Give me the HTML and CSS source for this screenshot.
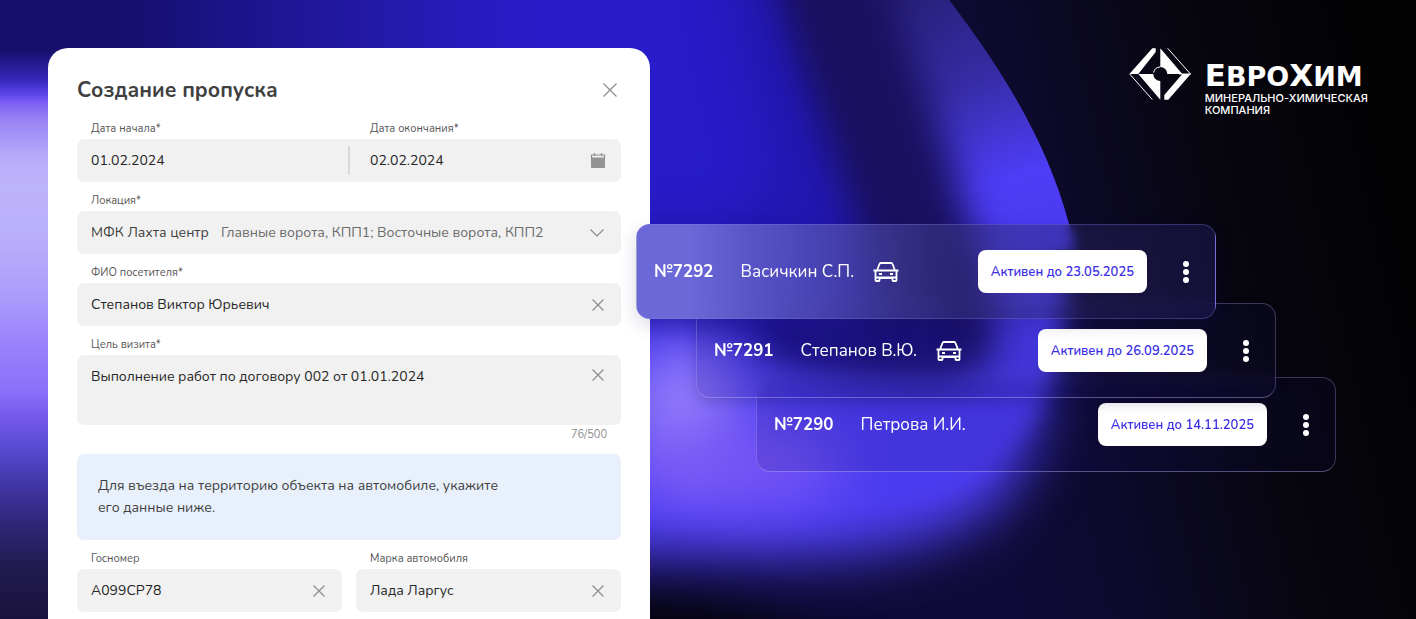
FILE: index.html
```html
<!DOCTYPE html>
<html lang="ru">
<head>
<meta charset="utf-8">
<title>Создание пропуска</title>
<meta name="viewport" content="width=device-width, initial-scale=1">
<link rel="stylesheet" href="styles.css">
</head>
<body>
<div class="page">
  <svg class="backdrop" viewBox="0 0 1416 619" preserveAspectRatio="none" aria-hidden="true">
    <defs>
      <linearGradient id="base" gradientUnits="userSpaceOnUse" x1="0" y1="0" x2="1416" y2="0">
        <stop offset="0" stop-color="#170f6b"/>
        <stop offset=".09" stop-color="#170f6e"/>
        <stop offset=".16" stop-color="#1b1388"/>
        <stop offset=".28" stop-color="#241aac"/>
        <stop offset=".4" stop-color="#2a1ecb"/>
        <stop offset=".46" stop-color="#271cc2"/>
      </linearGradient>
      <linearGradient id="fade" gradientUnits="userSpaceOnUse" x1="420" y1="0" x2="640" y2="0">
        <stop offset="0" stop-color="#fff"/>
        <stop offset="1" stop-color="#000"/>
      </linearGradient>
      <mask id="topleft"><rect width="640" height="130" fill="url(#fade)"/></mask>
      <linearGradient id="left" gradientUnits="userSpaceOnUse" x1="0" y1="0" x2="0" y2="619">
        <stop offset="0" stop-color="#170f6b" stop-opacity="0"/>
        <stop offset=".08" stop-color="#170f6b"/>
        <stop offset=".128" stop-color="#3527b8"/>
        <stop offset=".152" stop-color="#5a44ea"/>
        <stop offset=".165" stop-color="#7a5cf4"/>
        <stop offset=".19" stop-color="#9580f4"/>
        <stop offset=".255" stop-color="#b8acf8"/>
        <stop offset=".3" stop-color="#beb4fa"/>
        <stop offset=".38" stop-color="#b9aefa"/>
        <stop offset=".48" stop-color="#ab9cfb"/>
        <stop offset=".55" stop-color="#9a84fb"/>
        <stop offset=".63" stop-color="#8a70fa"/>
        <stop offset=".675" stop-color="#7558e8"/>
        <stop offset=".72" stop-color="#5a4bd4"/>
        <stop offset=".78" stop-color="#4336a8"/>
        <stop offset=".84" stop-color="#31277c"/>
        <stop offset=".91" stop-color="#231c52"/>
        <stop offset="1" stop-color="#18123c"/>
      </linearGradient>
      <linearGradient id="dark" gradientUnits="userSpaceOnUse" x1="960" y1="340" x2="1416" y2="240">
        <stop offset="0" stop-color="#0f0b38"/>
        <stop offset=".25" stop-color="#0d0a2c"/>
        <stop offset=".6" stop-color="#07060f"/>
        <stop offset="1" stop-color="#020203"/>
      </linearGradient>
      <linearGradient id="blade" gradientUnits="userSpaceOnUse" x1="900" y1="0" x2="980" y2="240">
        <stop offset="0" stop-color="#2a217c"/>
        <stop offset=".4" stop-color="#372ca6"/>
        <stop offset=".8" stop-color="#4d3df6"/>
        <stop offset="1" stop-color="#4b3cf2"/>
      </linearGradient>
      <filter id="b2" color-interpolation-filters="sRGB" filterUnits="userSpaceOnUse" x="0" y="-200" width="1600" height="1000"><feGaussianBlur stdDeviation="2"/></filter>
      <filter id="b10" color-interpolation-filters="sRGB" filterUnits="userSpaceOnUse" x="0" y="-200" width="1600" height="1100"><feGaussianBlur stdDeviation="10"/></filter>
      <filter id="b18" color-interpolation-filters="sRGB" filterUnits="userSpaceOnUse" x="0" y="-200" width="1600" height="1100"><feGaussianBlur stdDeviation="18"/></filter>
      <filter id="b28" color-interpolation-filters="sRGB" filterUnits="userSpaceOnUse" x="0" y="-200" width="1600" height="1100"><feGaussianBlur stdDeviation="28"/></filter>
      <clipPath id="edge"><path d="M0-40H918C990 50 1044 130 1069 224C1080 270 1120 330 1140 640H0Z"/></clipPath>
    </defs>

    <rect width="1416" height="619" fill="url(#dark)"/>
    <path fill="#4e3ef4" filter="url(#b28)" d="M200 300H1040C1050 380 1044 440 1012 490C966 546 860 562 760 558C700 556 680 556 200 556Z"/>
    <path fill="#4b3cf0" filter="url(#b10)" d="M600 250H1064C1070 280 1062 340 1046 390C1030 440 980 490 900 500H600Z"/>

    <g clip-path="url(#edge)" filter="url(#b2)">
      <path fill="url(#blade)" d="M400-100H1100V200C1100 260 1060 250 1000 260H400Z"/>
      <path fill="#1a1160" filter="url(#b18)" d="M740-100H862C896 30 946 130 972 230C1000 310 1008 368 966 374C910 380 840 376 760 348Z"/>
      <path fill="#2217b0" filter="url(#b18)" d="M400-120H748C780 40 836 140 862 250C874 310 866 352 840 354C780 350 700 320 400 308Z"/>
      <path fill="#281cca" filter="url(#b28)" d="M400-120H710C720 40 756 120 766 180C730 230 700 230 400 220Z"/>
      <path fill="#1b1180" filter="url(#b18)" d="M760 320C820 320 900 310 960 320V362C900 372 820 356 760 336Z"/>
    </g>

    <rect width="640" height="130" fill="url(#base)" mask="url(#topleft)"/>
    <rect width="120" height="619" fill="url(#left)"/>

    <ellipse cx="684" cy="410" rx="54" ry="66" fill="#937cfa" filter="url(#b28)"/>
    <ellipse cx="735" cy="468" rx="110" ry="44" fill="#7c59f6" opacity=".85" filter="url(#b28)"/>
    <path fill="#05040d" filter="url(#b18)" d="M400 596C720 592 800 610 940 700H400Z"/>
  </svg>

  <main class="layout">
    <form class="panel">
      <header class="panel-head">
        <h1 class="panel-title">Создание пропуска</h1>
        <button class="icon-btn" type="button" aria-label="Закрыть">
          <svg class="cross-lg" viewBox="0 0 14 14"><path d="M.5.5l13 13M13.5.5l-13 13"/></svg>
        </button>
      </header>

      <div class="field">
        <div class="pair">
          <label class="label" for="from">Дата начала*</label>
          <label class="label" for="to">Дата окончания*</label>
        </div>
        <div class="dates">
          <input class="input" id="from" type="text" value="01.02.2024">
          <div class="date-end">
            <input class="input" id="to" type="text" value="02.02.2024">
            <button class="icon-btn" type="button" aria-label="Календарь">
              <svg class="calendar" viewBox="0 0 14 15"><path class="fill" d="M0 4.500h14V14a1 1 0 0 1-1 1H1a1 1 0 0 1-1-1z"/><path d="M.5 5V2h13v3M3.500 0v3M10.500 0v3"/></svg>
            </button>
          </div>
        </div>
      </div>

      <div class="field">
        <label class="label" for="place">Локация*</label>
        <div class="box">
          <select class="select" id="place"><option>МФК Лахта центр</option></select>
          <span class="gates">Главные ворота, КПП1; Восточные ворота, КПП2</span>
          <svg class="chevron" viewBox="0 0 14 8"><path d="M.5.5L7 7l6.500-6.500"/></svg>
        </div>
      </div>

      <div class="field">
        <label class="label" for="visitor">ФИО посетителя*</label>
        <div class="box">
          <input class="input" id="visitor" type="text" value="Степанов Виктор Юрьевич">
          <button class="icon-btn" type="button" aria-label="Очистить"><svg class="cross" viewBox="0 0 12 12"><path d="M.5.5l11 11M11.500.5l-11 11"/></svg></button>
        </div>
      </div>

      <div class="field">
        <label class="label" for="purpose">Цель визита*</label>
        <div class="box box-tall">
          <textarea class="input textarea" id="purpose" rows="2">Выполнение работ по договору 002 от 01.01.2024</textarea>
          <button class="icon-btn" type="button" aria-label="Очистить"><svg class="cross" viewBox="0 0 12 12"><path d="M.5.5l11 11M11.500.5l-11 11"/></svg></button>
        </div>
        <p class="counter">76/500</p>
      </div>

      <p class="notice">Для въезда на территорию объекта на автомобиле, укажите<br>его данные ниже.</p>

      <div class="pair">
        <div class="field">
          <label class="label" for="plate">Госномер</label>
          <div class="box">
            <input class="input" id="plate" type="text" value="А099СР78">
            <button class="icon-btn" type="button" aria-label="Очистить"><svg class="cross" viewBox="0 0 12 12"><path d="M.5.5l11 11M11.500.5l-11 11"/></svg></button>
          </div>
        </div>
        <div class="field">
          <label class="label" for="model">Марка автомобиля</label>
          <div class="box">
            <input class="input" id="model" type="text" value="Лада Ларгус">
            <button class="icon-btn" type="button" aria-label="Очистить"><svg class="cross" viewBox="0 0 12 12"><path d="M.5.5l11 11M11.500.5l-11 11"/></svg></button>
          </div>
        </div>
      </div>
    </form>

    <section class="side">
      <div class="brand">
        <svg class="brand-mark" viewBox="0 0 62 52" aria-hidden="true">
          <path d="M.4 26L23.300.3h3.400V4L9.300 26zM31.300.3L53.300 26H38.300a7 7 0 0 0-7-7zM9.300 26h15a7 7 0 0 0 7 7v18.700zM61.700 26L39.300 51.700h-4V47L53.300 26z"/>
          <path class="thin" d="M38.700.3L61.500 26H50M.7 26l22.600 25.500M24.600 24.500a7 7 0 0 1 6.700-5.500"/>
        </svg>
        <div class="brand-text">
          <div class="brand-name">Е<span class="brand-small">вро</span>Х<span class="brand-small">им</span></div>
          <div class="brand-sub">МИНЕРАЛЬНО-ХИМИЧЕСКАЯ<br>КОМПАНИЯ</div>
        </div>
      </div>

      <ul class="passes">
        <li class="pass pass-front">
          <span class="pass-no">№7292</span>
          <span class="pass-name">Васичкин С.П.</span>
          <svg class="car" viewBox="0 0 26 20"><path d="M4 8.500L6.500 2Q6.800 1 7.800 1h10.400q1 0 1.300 1L22 8.500M.5 8.500h25M2.500 9v9.300q0 .7.7.7h2.600q.7 0 .7-.7V16h13v2.300q0 .7.7.7h2.600q.7 0 .7-.7V9M2.500 15.500h21M6 12h3M17 12h3"/></svg>
          <button class="status" type="button">Активен до 23.05.2025</button>
          <button class="more" type="button" aria-label="Меню"><svg class="dots" viewBox="0 0 6 22"><circle cx="3" cy="3" r="3"/><circle cx="3" cy="11" r="3"/><circle cx="3" cy="19" r="3"/></svg></button>
        </li>
        <li class="pass pass-middle">
          <span class="pass-no">№7291</span>
          <span class="pass-name">Степанов В.Ю.</span>
          <svg class="car" viewBox="0 0 26 20"><path d="M4 8.500L6.500 2Q6.800 1 7.800 1h10.400q1 0 1.300 1L22 8.500M.5 8.500h25M2.500 9v9.300q0 .7.7.7h2.600q.7 0 .7-.7V16h13v2.300q0 .7.7.7h2.600q.7 0 .7-.7V9M2.500 15.500h21M6 12h3M17 12h3"/></svg>
          <button class="status" type="button">Активен до 26.09.2025</button>
          <button class="more" type="button" aria-label="Меню"><svg class="dots" viewBox="0 0 6 22"><circle cx="3" cy="3" r="3"/><circle cx="3" cy="11" r="3"/><circle cx="3" cy="19" r="3"/></svg></button>
        </li>
        <li class="pass pass-back">
          <span class="pass-no">№7290</span>
          <span class="pass-name">Петрова И.И.</span>
          <button class="status" type="button">Активен до 14.11.2025</button>
          <button class="more" type="button" aria-label="Меню"><svg class="dots" viewBox="0 0 6 22"><circle cx="3" cy="3" r="3"/><circle cx="3" cy="11" r="3"/><circle cx="3" cy="19" r="3"/></svg></button>
        </li>
      </ul>
    </section>
  </main>
</div>
</body>
</html>
```

FILE: styles.css
```css
* { box-sizing: border-box; }

body {
  margin: 0;
  background: #08061a;
  color: #333;
  font-family: "Nunito", "Noto Sans", sans-serif;
  font-size: 14px;
}

h1, p, ul { margin: 0; padding: 0; font-weight: inherit; }

button, input, select, textarea { font: inherit; color: inherit; }

svg { display: block; }

.page {
  position: relative;
  min-height: 100vh;
  display: flex;
  overflow: hidden;
}

.backdrop {
  position: absolute;
  inset: 0;
  width: 100%;
  height: 100%;
}

.layout {
  position: relative;
  flex: 1;
  display: grid;
  grid-template-columns: minmax(0, 602fr) minmax(0, 718fr);
  padding: 48px 48px 0;
}

/* Form */

.panel {
  display: flex;
  flex-direction: column;
  gap: 11px;
  padding: 28px 29px 7px;
  background: #fff;
  border-radius: 20px 20px 0 0;
}

.panel-head {
  display: flex;
  align-items: center;
  justify-content: space-between;
  height: 28px;
  padding-right: 4px;
  margin-bottom: 6px;
}

.panel-title {
  color: #404040;
  font-size: 21px;
  line-height: 28px;
  font-weight: 700;
}

.field {
  display: flex;
  flex-direction: column;
  gap: 3px;
}

.pair {
  display: grid;
  grid-template-columns: 1fr 1fr;
  gap: 14px;
}

.label {
  padding-left: 14px;
  color: #555;
  font-size: 11px;
  line-height: 15px;
}

.box, .dates {
  height: 43px;
  border-radius: 7px;
  background: #f1f1f1;
}

.box {
  display: flex;
  align-items: center;
  padding: 0 17px 0 14px;
}

.box-tall {
  height: 70px;
  align-items: flex-start;
  padding-top: 11px;
}

.dates {
  display: grid;
  grid-template-columns: 1fr 1fr;
  align-items: center;
  padding-left: 14px;
}

.date-end {
  display: flex;
  align-items: center;
  height: 29px;
  margin-left: -8px;
  padding: 0 16px 0 20px;
  border-left: 2px solid #d9d9d9;
}

.input {
  flex: 1;
  min-width: 0;
  padding: 0;
  border: 0;
  outline: 0;
  background: none;
  color: #262626;
  line-height: 22px;
}

.textarea {
  display: block;
  resize: none;
  overflow: hidden;
}

.select {
  padding: 0;
  border: 0;
  background: none;
  color: #404040;
  appearance: none;
  field-sizing: content;
}

.gates {
  flex: 1;
  margin-left: 12px;
  color: #6b6b6b;
  white-space: nowrap;
}

.icon-btn {
  flex: none;
  padding: 0;
  border: 0;
  background: none;
  cursor: pointer;
}

.cross, .cross-lg, .chevron, .calendar {
  flex: none;
  fill: none;
  stroke: #8c8c8c;
  stroke-width: 1.2;
  overflow: visible;
}

.cross { width: 12px; height: 12px; }
.cross-lg { width: 14px; height: 14px; }
.chevron { width: 14px; height: 8px; }
.calendar { width: 14px; height: 15px; }
.calendar .fill { fill: #949494; stroke: none; }

.box-tall .icon-btn { margin-top: 3px; }

.counter {
  padding-right: 14px;
  color: #8c8c8c;
  font-size: 11px;
  line-height: 14px;
  text-align: right;
}

.notice {
  padding: 21px;
  margin-top: 1px;
  border-radius: 7px;
  background: #e8f0fc;
  color: #404040;
  line-height: 22px;
}

/* Brand */

.brand {
  display: flex;
  justify-content: flex-end;
  gap: 14px;
}

.brand-mark {
  width: 62px;
  height: 52px;
  fill: #fff;
}

.brand-mark .thin { fill: none; stroke: #fff; }

.brand-text { padding-top: 12px; color: #fff; }

.brand-name {
  font-family: "DejaVu Sans", sans-serif;
  font-size: 31px;
  line-height: 30px;
  font-weight: 700;
}

.brand-small {
  font-size: 27px;
  text-transform: uppercase;
}

.brand-sub {
  font-family: Inter, sans-serif;
  font-size: 11px;
  line-height: 12px;
  font-weight: 500;
}

/* Passes */

.passes {
  position: relative;
  margin: 108px 32px 0 -14px;
  list-style: none;
}

.pass {
  position: relative;
  display: flex;
  align-items: center;
  width: calc(100% - 120px);
  height: 95px;
  padding: 0 26px 0 17px;
  border: 1px solid rgba(190, 180, 255, .28);
  border-bottom-color: rgba(200, 190, 255, .4);
  border-radius: 14px;
  color: #fff;
  backdrop-filter: blur(6px);
}

.pass-front {
  z-index: 3;
  border-color: rgba(140, 130, 230, .3);
  background: linear-gradient(90deg, #6b69d8 9%, rgba(90, 87, 198, .9) 22%, rgba(70, 66, 160, .75) 40%, rgba(56, 51, 126, .55) 56%, rgba(44, 40, 100, .4) 72%, rgba(38, 34, 110, .4));
  box-shadow: 0 6px 18px rgba(30, 20, 100, .16);
}

.pass-middle {
  z-index: 2;
  margin: -16px 0 0 60px;
  background: rgba(24, 16, 100, .16);
  box-shadow: 0 4px 14px rgba(10, 6, 60, .2);
}

.pass-back {
  z-index: 1;
  margin: -21px 0 0 120px;
  background: rgba(24, 16, 100, .14);
}

.pass-no {
  font-size: 17px;
  font-weight: 700;
}

.pass-name {
  margin-left: 27px;
  font-size: 17px;
}

.car {
  flex: none;
  width: 26px;
  height: 20px;
  margin-left: 19px;
  fill: none;
  stroke: #fff;
  stroke-width: 1.8;
  stroke-linejoin: round;
}

.status {
  height: 43px;
  margin-left: auto;
  padding: 0 13px;
  border: 0;
  border-radius: 8px;
  background: #fff;
  color: #3b2fe6;
  font-size: 13px;
  font-weight: 600;
  white-space: nowrap;
}

.more {
  margin-left: 36px;
  padding: 0;
  border: 0;
  background: none;
}

.dots { width: 6px; height: 22px; fill: #fff; }

@media (max-width: 900px) {
  .layout { grid-template-columns: minmax(0, 1fr); }
  .side { padding: 32px 0; }
  .passes { margin: 32px 0 0; }
}
```
